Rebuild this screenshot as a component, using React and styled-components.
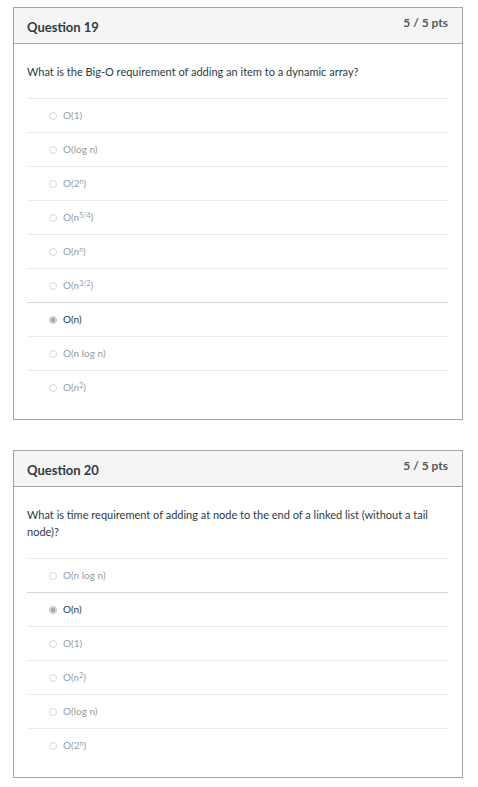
import React from "react";
import styled, { createGlobalStyle } from "styled-components";

const GlobalStyle = createGlobalStyle`
  * { box-sizing: border-box; }
  body {
    margin: 0;
    background: #fff;
    color: #2d3b45;
    font-family: Lato, "Open Sans", sans-serif;
    font-size: 11px;
    line-height: 17px;
  }
`;

const Quiz = styled.main`
  display: flex;
  flex-direction: column;
  gap: 30px;
  padding: 7px 15px 9px 13px;
`;

const Card = styled.section`
  border: 1px solid #a5a5a5;
`;

const Header = styled.header`
  display: flex;
  justify-content: space-between;
  align-items: flex-start;
  padding: 6px 14px 6px 13px;
  background: #f5f5f5;
  border-bottom: 1px solid #a5a5a5;
`;

const Title = styled.h2`
  margin: 0;
  padding-top: 3px;
  font-size: 13px;
  line-height: 20px;
  font-weight: 700;
`;

const Points = styled.span`
  color: #595959;
  font-size: 12px;
  font-weight: 700;
`;

const Body = styled.div`
  padding: 19px 14px 15px 13px;
`;

const Answers = styled.fieldset`
  min-width: 0;
  margin: 0;
  padding: 0;
  border: 0;
`;

const Prompt = styled.legend`
  padding: 0 0 18px;
`;

const Answer = styled.label`
  display: flex;
  align-items: center;
  gap: 6px;
  height: 34px;
  padding-left: 22px;
  border-top: 1px solid ${({ $selected }) => ($selected ? "#d5d5d5" : "#ebebeb")};
  color: ${({ $selected }) => ($selected ? "#263a52" : "#969da2")};
  font-size: 10px;
`;

const Radio = styled.input`
  appearance: none;
  flex: none;
  width: 8px;
  height: 8px;
  margin: 0;
  border: 1px solid #d9d9dc;
  border-radius: 50%;
  background: #fff;

  &:checked {
    border-color: #bcbcc4;
    background: radial-gradient(circle, #a9a9b3 0 2px, #fff 3px);
  }
`;

const Power = styled.sup`
  font-size: 7px;
  line-height: 0;
  vertical-align: 3px;
`;

const questions = [
  {
    number: 19,
    prompt: "What is the Big-O requirement of adding an item to a dynamic array?",
    selected: 6,
    answers: [["1"], ["log n"], ["2", "n"], ["n", "5/4"], ["n", "n"], ["n", "3/2"], ["n"], ["n log n"], ["n", "2"]],
  },
  {
    number: 20,
    prompt: "What is time requirement of adding at node to the end of a linked list (without a tail node)?",
    selected: 1,
    answers: [["n log n"], ["n"], ["1"], ["n", "2"], ["log n"], ["2", "n"]],
  },
];

function Question({ number, prompt, selected, answers }) {
  return (
    <Card>
      <Header>
        <Title>Question {number}</Title>
        <Points>5 / 5 pts</Points>
      </Header>
      <Body>
        <Answers>
          <Prompt>{prompt}</Prompt>
          {answers.map(([base, power], index) => (
            <Answer key={index} $selected={index === selected}>
              <Radio type="radio" name={`question-${number}`} defaultChecked={index === selected} />
              <span>
                O({base}
                {power && <Power>{power}</Power>})
              </span>
            </Answer>
          ))}
        </Answers>
      </Body>
    </Card>
  );
}

export default function App() {
  return (
    <>
      <GlobalStyle />
      <Quiz>
        {questions.map((question) => (
          <Question key={question.number} {...question} />
        ))}
      </Quiz>
    </>
  );
}
